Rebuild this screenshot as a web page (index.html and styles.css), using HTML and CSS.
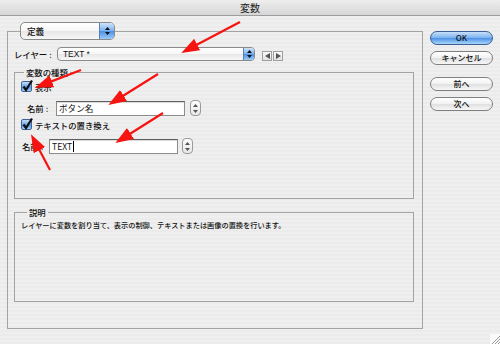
FILE: index.html
```html
<!doctype html>
<html lang="ja">
<head>
    <meta charset="UTF-8">
    <title>変数</title>
    <link rel="stylesheet" href="styles.css">
</head>
<body>
    <div class="window">
        <div class="titlebar">変数</div>
        <div class="dialog">
            <div class="main">
                <div class="tab-select">
                    <span class="popup popup--tab">
                        <span class="popup__text">定義</span>
                        <span class="popup__cap">
                            <svg width="5" height="8" viewBox="0 0 5 8"><path d="M2.5 0 L5 3 L0 3 Z M0 5 L5 5 L2.5 8 Z" fill="#111"/></svg>
                        </span>
                    </span>
                </div>
                <div class="panel">
                    <div class="layer-row">
                        <span class="label label--layer">レイヤー :</span>
                        <span class="popup popup--layer">
                            <span class="popup__text">TEXT *</span>
                            <span class="popup__cap">
                                <svg width="5" height="8" viewBox="0 0 5 8"><path d="M2.5 0 L5 3 L0 3 Z M0 5 L5 5 L2.5 8 Z" fill="#111"/></svg>
                            </span>
                        </span>
                        <span class="nav">
                            <span class="nav__btn"><svg width="5" height="6" viewBox="0 0 5 6"><path d="M0 3 L5 0 L5 6 Z" fill="#555"/></svg></span>
                            <span class="nav__btn"><svg width="5" height="6" viewBox="0 0 5 6"><path d="M5 3 L0 0 L0 6 Z" fill="#555"/></svg></span>
                        </span>
                    </div>

                    <fieldset class="group group--vars">
                        <legend>変数の種類</legend>
                        <div class="check-row check-row--first">
                            <span class="checkbox"><svg width="13" height="14" viewBox="0 0 13 14"><path d="M2.5 7.5 L5 11 L11 1.5" fill="none" stroke="#111" stroke-width="2.2"/></svg></span>
                            <span>表示</span>
                        </div>
                        <div class="field-row field-row--name">
                            <span class="label">名前 :</span>
                            <span class="input">ボタン名</span>
                            <span class="stepper"><svg width="5" height="9" viewBox="0 0 5 9"><path d="M2.5 0 L5 3 L0 3 Z M0 6 L5 6 L2.5 9 Z" fill="#555"/></svg></span>
                        </div>
                        <div class="check-row">
                            <span class="checkbox"><svg width="13" height="14" viewBox="0 0 13 14"><path d="M2.5 7.5 L5 11 L11 1.5" fill="none" stroke="#111" stroke-width="2.2"/></svg></span>
                            <span>テキストの置き換え</span>
                        </div>
                        <div class="field-row field-row--text">
                            <span class="label">名前 :</span>
                            <span class="input">TEXT<span class="caret"></span></span>
                            <span class="stepper"><svg width="5" height="9" viewBox="0 0 5 9"><path d="M2.5 0 L5 3 L0 3 Z M0 6 L5 6 L2.5 9 Z" fill="#555"/></svg></span>
                        </div>
                    </fieldset>

                    <fieldset class="group group--desc">
                        <legend>説明</legend>
                        <p class="desc">レイヤーに変数を割り当て、表示の制御、テキストまたは画像の置換を行います。</p>
                    </fieldset>
                </div>
            </div>

            <div class="buttons">
                <button class="btn btn--default">OK</button>
                <button class="btn">キャンセル</button>
                <button class="btn btn--gap">前へ</button>
                <button class="btn">次へ</button>
            </div>
        </div>

        <svg class="grip" width="10" height="10" viewBox="0 0 10 10">
            <rect width="10" height="10" fill="#fafafa"/>
            <path d="M2 10 L10 2 M5 10 L10 5 M8 10 L10 8" stroke="#9a9a9a" stroke-width="1"/>
        </svg>

        <!-- red annotation arrows -->
        <svg class="arrows" width="500" height="344" viewBox="0 0 500 344">
            <defs>
                <marker id="head" markerUnits="userSpaceOnUse" markerWidth="18" markerHeight="13" refX="8" refY="6.5" orient="auto">
                    <path d="M0 0 L18 6.5 L0 13 Z" fill="#f5140f"/>
                </marker>
            </defs>
            <g stroke="#f5140f" stroke-width="2.2" marker-end="url(#head)">
                <line x1="240" y1="22" x2="190.1" y2="48.3"/>
                <line x1="81" y1="70" x2="44.4" y2="84.1"/>
                <line x1="158" y1="74" x2="116.8" y2="99.8"/>
                <line x1="163" y1="113" x2="123.8" y2="137.7"/>
                <line x1="50" y1="170" x2="35.7" y2="143.1"/>
            </g>
        </svg>
    </div>
</body>
</html>
```

FILE: styles.css
```css
*, ::before, ::after {
    padding: 0;
    margin: 0;
    box-sizing: border-box;
}
body {
    font-family: 'Liberation Sans', 'Noto Sans CJK JP', sans-serif;
    font-size: 8.4px;
    color: #111;
}
.window {
    position: relative;
    width: 500px;
    height: 344px;
    overflow: hidden;
    background: repeating-linear-gradient(to bottom, #efefef 0, #efefef 2px, #ebebeb 2px, #ebebeb 4px);
}
.titlebar {
    height: 16px;
    line-height: 15px;
    text-align: center;
    font-family: 'Noto Sans CJK JP', sans-serif;
    font-size: 10px;
    color: #222;
    background: linear-gradient(#eeeeee, #d6d6d6);
    border-bottom: 1px solid #9c9c9c;
}
.dialog {
    display: flex;
    padding: 6px 0 0 7px;
}
.main {
    width: 416px;
}
.tab-select {
    position: relative;
    z-index: 1;
    height: 18px;
    padding-left: 13px;
    margin-bottom: -9px;
}

/* popup menus */
.popup {
    display: flex;
    align-items: stretch;
    border: 1px solid #8a8a8a;
    border-radius: 5px;
    background: linear-gradient(#ffffff, #f6f6f6 50%, #e7e7e7 51%, #f7f7f7);
    overflow: hidden;
}
.popup__text {
    flex: 1;
    display: flex;
    align-items: center;
}
.popup__cap {
    width: 15px;
    display: flex;
    align-items: center;
    justify-content: center;
    border-left: 1px solid #5a7fb5;
    background: linear-gradient(#cfe3fb, #79b1ef 50%, #4a8fe6 51%, #9ccbf7);
}
.popup--tab {
    width: 95px;
    height: 18px;
}
.popup--tab .popup__text {
    padding-left: 6px;
    font-family: 'Noto Sans CJK JP', sans-serif;
    font-size: 8.6px;
    font-weight: 500;
}
.popup--layer {
    width: 198px;
    height: 14px;
    border-radius: 4px;
}
.popup--layer .popup__text {
    padding-left: 5px;
}
.popup--layer .popup__cap {
    width: 11px;
}

.panel {
    height: 298px;
    border: 1px solid #a3a3a3;
    padding: 15px 8px 0 6px;
}
.layer-row {
    display: flex;
    align-items: center;
    height: 14px;
}
.label {
    font-family: 'Noto Sans CJK JP', sans-serif;
    font-weight: 500;
    white-space: nowrap;
}
.label--layer {
    width: 43px;
}
.nav {
    display: flex;
    gap: 1px;
    margin-left: 7px;
    margin-top: 3px;
}
.nav__btn {
    width: 10px;
    height: 10px;
    border: 1px solid #a0a0a0;
    background: linear-gradient(#fbfbfb, #e2e2e2);
    display: flex;
    align-items: center;
    justify-content: center;
}

/* group boxes */
.group {
    border: 1px solid #a3a3a3;
    padding: 0;
    min-width: 0;
    font-family: 'Noto Sans CJK JP', sans-serif;
    font-weight: 500;
}
.group legend {
    font-size: 8.4px;
    line-height: 12px;
    padding: 0 2px;
    margin-left: 9px;
}
.group--vars {
    margin-top: 5px;
    padding-bottom: 44px;
}
.check-row {
    display: flex;
    align-items: center;
    height: 13px;
    padding-left: 6px;
    margin-top: 2px;
}
.check-row span:last-child {
    margin-left: 3px;
}
.checkbox {
    position: relative;
    width: 11px;
    height: 11px;
    border: 1px solid #3f6396;
    border-radius: 2px;
    background: linear-gradient(#c4ddfa, #6ea9ec 50%, #4b8fe4 51%, #a3cff8);
}
.checkbox svg {
    position: absolute;
    left: -1px;
    top: -3px;
}
.field-row {
    display: flex;
    align-items: center;
    margin-top: 7px;
}
.field-row--name {
    padding-left: 12px;
}
.field-row--name .label {
    width: 29px;
}
.field-row--text {
    padding-left: 7px;
}
.field-row--text .label {
    width: 27px;
}
.input {
    display: flex;
    align-items: center;
    width: 129px;
    height: 15px;
    padding-left: 2px;
    background: #fff;
    border: 1px solid #8c8c8c;
    border-top-color: #5e5e5e;
    box-shadow: inset 0 1px 1px rgba(0, 0, 0, 0.15);
    font-size: 8.6px;
    font-weight: 400;
}
.caret {
    width: 1px;
    height: 11px;
    background: #000;
    margin-left: 1px;
}
.stepper {
    width: 11px;
    height: 16px;
    margin-left: 5px;
    border: 1px solid #9a9a9a;
    border-radius: 4px;
    background: linear-gradient(#fdfdfd, #e6e6e6);
    display: flex;
    align-items: center;
    justify-content: center;
}
.field-row--text .stepper {
    margin-left: 4px;
}
.group--desc {
    margin-top: 7px;
    height: 96px;
}
.group--desc legend {
    margin-left: 12px;
}
.desc {
    font-size: 7.2px;
    line-height: 10px;
    margin: 2px 0 0 6px;
    white-space: nowrap;
}

/* right column buttons */
.buttons {
    display: flex;
    flex-direction: column;
    width: 63px;
    margin-left: 7px;
    padding-top: 9px;
}
.btn {
    height: 14px;
    margin-bottom: 6px;
    border: 1px solid #7f7f7f;
    border-radius: 7px;
    background: linear-gradient(#ffffff, #f1f1f1 50%, #e0e0e0 51%, #f6f6f6);
    font-family: 'Noto Sans CJK JP', sans-serif;
    font-size: 8px;
    font-weight: 500;
    line-height: 12px;
    color: #111;
}
.btn--default {
    border-color: #3b5f92;
    background: linear-gradient(#c8e0fb, #78b1ef 50%, #4a8fe6 51%, #a9d6fb);
}
.btn--gap {
    margin-top: 6px;
}

.grip {
    position: absolute;
    right: 0;
    bottom: 0;
}
.arrows {
    position: absolute;
    left: 0;
    top: 0;
    pointer-events: none;
}
```
